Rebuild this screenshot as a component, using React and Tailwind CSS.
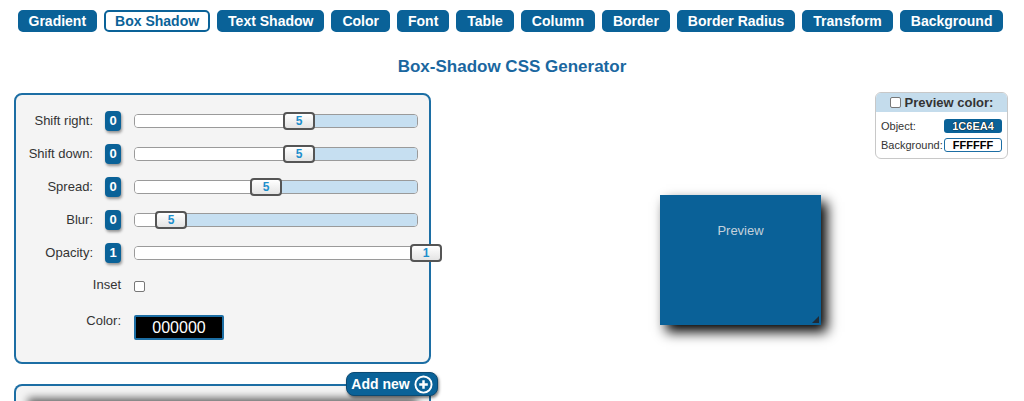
import React from "react";

const tabs = [
  "Gradient",
  "Box Shadow",
  "Text Shadow",
  "Color",
  "Font",
  "Table",
  "Column",
  "Border",
  "Border Radius",
  "Transform",
  "Background",
];

const sliders = [
  { label: "Shift right:", badge: "0", value: "5", left: 149, fill: true },
  { label: "Shift down:", badge: "0", value: "5", left: 149, fill: true },
  { label: "Spread:", badge: "0", value: "5", left: 116, fill: true },
  { label: "Blur:", badge: "0", value: "5", left: 21, fill: true },
  { label: "Opacity:", badge: "1", value: "1", left: 276, fill: false },
];

function Slider({ left, value, fill }) {
  return (
    <div className="relative w-[284px] h-[14px]">
      <div className="flex w-full h-full rounded-[4px] border border-[#9a9a9a] overflow-hidden">
        <div className="h-full bg-white" style={{ width: fill ? left + 16 : "100%" }} />
        {fill && <div className="flex-1 h-full bg-[#c6dff1]" />}
      </div>
      <div
        className="absolute top-1/2 -translate-y-1/2 w-[32px] h-[18px] border-2 border-[#555] rounded-[4px] bg-gradient-to-b from-white to-[#e4e4e4] flex items-center justify-center text-[12px] font-bold text-[#1e8fcc]"
        style={{ left }}
      >
        {value}
      </div>
    </div>
  );
}

function Badge({ children }) {
  return (
    <div className="w-[16px] h-[20px] rounded-[4px] bg-[#0a6298] text-white font-bold text-[13px] flex items-center justify-center shadow-[1px_2px_3px_rgba(0,0,0,0.4)]">
      {children}
    </div>
  );
}

export default function App() {
  return (
    <div className="w-[1024px] h-[401px] overflow-hidden bg-white font-['Liberation_Sans',Arial,sans-serif] text-[#333]">
      {/* nav */}
      <div className="pt-[10px] flex justify-center gap-[7px] pr-[3px]">
        {tabs.map((t) =>
          t === "Box Shadow" ? (
            <div
              key={t}
              className="h-[22px] px-[9px] border-2 border-[#0a6298] rounded-[5px] bg-white text-[#0a6298] text-[14px] font-bold leading-none flex items-center"
            >
              {t}
            </div>
          ) : (
            <div
              key={t}
              className="h-[22px] px-[9px] border-2 border-[#0a6298] rounded-[5px] bg-[#0a6298] text-white text-[14px] font-bold leading-none flex items-center"
            >
              {t}
            </div>
          )
        )}
      </div>

      <h1 className="mt-[25px] text-center text-[17px] leading-[20px] font-bold text-[#1a67a0]">
        Box-Shadow CSS Generator
      </h1>

      <div className="flex px-[14px] mt-[16px]">
        {/* left column */}
        <div className="w-[417px] shrink-0 flex flex-col">
          <div className="border-2 border-[#1c6ea4] rounded-[8px] bg-[#f4f4f4] pt-[9px] pb-[22px]">
            {sliders.map((s) => (
              <div key={s.label} className="h-[33px] flex items-center">
                <div className="w-[77px] text-right text-[13px]">{s.label}</div>
                <div className="ml-[12px]">
                  <Badge>{s.badge}</Badge>
                </div>
                <div className="ml-[13px]">
                  <Slider left={s.left} value={s.value} fill={s.fill} />
                </div>
              </div>
            ))}
            <div className="h-[33px] flex items-center">
              <div className="w-[105px] text-right text-[13px] -mt-[1px]">Inset</div>
              <div className="ml-[13px] mt-[2px] w-[11px] h-[11px] bg-white border border-[#777] rounded-[2px]" />
            </div>
            <div className="mt-[13px] flex items-start">
              <div className="w-[105px] text-right text-[13px] leading-[16px] -mt-[2px]">Color:</div>
              <div className="ml-[13px] w-[90px] h-[25px] bg-black border-2 border-[#1c6ea4] rounded-[2px] text-white text-[16px] flex items-center justify-center">
                000000
              </div>
            </div>
          </div>

          <div className="flex justify-end -mr-[7px] mt-[8px] relative z-10">
            <div className="h-[24px] w-[92px] rounded-[8px] bg-[#0a6298] border border-[#0b4a73] shadow-[1px_2px_3px_rgba(0,0,0,0.5)] flex items-center justify-center gap-[4px] text-white text-[14px] font-bold">
              Add new
              <svg width="19" height="19" viewBox="0 0 20 20">
                <circle cx="10" cy="10" r="8.5" fill="none" stroke="white" strokeWidth="2" />
                <path d="M10 5.5v9M5.5 10h9" stroke="white" strokeWidth="2.6" />
              </svg>
            </div>
          </div>

          <div className="-mt-[12px] h-[40px] border-2 border-b-0 border-[#1c6ea4] rounded-t-[8px] bg-[#f4f4f4] pt-[16px] px-[16px]">
            <div className="h-[30px] bg-[#333] shadow-[0_0_8px_4px_rgba(0,0,0,0.6)]" />
          </div>
        </div>

        {/* right column */}
        <div className="flex-1 flex flex-col pr-[2px]">
          <div className="self-end w-[133px] border border-[#c8c8c8] rounded-[6px] overflow-hidden -mt-[1px]">
            <div className="h-[19px] bg-[#c4dcec] flex items-center justify-center gap-[4px]">
              <div className="w-[11px] h-[11px] bg-white border border-[#777] rounded-[2px]" />
              <span className="text-[13px] font-bold text-[#333]">Preview color:</span>
            </div>
            <div className="px-[5px] pt-[7px] pb-[6px] flex flex-col gap-[5px] text-[11px] leading-[14px]">
              <div className="flex items-center">
                <span>Object:</span>
                <div className="ml-auto w-[58px] h-[14px] rounded-[3px] bg-[#0a6298] text-white font-bold text-[11px] flex items-center justify-center [text-shadow:0_0_1px_#000,0_0_1px_#000]">
                  1C6EA4
                </div>
              </div>
              <div className="flex items-center">
                <span>Background:</span>
                <div className="ml-auto w-[58px] h-[14px] rounded-[3px] bg-white border border-[#1c6ea4] text-black font-bold text-[11px] flex items-center justify-center">
                  FFFFFF
                </div>
              </div>
            </div>
          </div>

          <div className="ml-[229px] mt-[36px] w-[161px] h-[130px] bg-[#0a6198] shadow-[6px_7px_12px_#000] flex flex-col">
            <div className="pt-[26px] text-center text-[13px] text-[#c3d1dc]">Preview</div>
            <div className="mt-auto self-end mr-[2px] mb-[2px]">
              <svg width="7" height="7" viewBox="0 0 7 7">
                <path d="M7 0L0 7h7z" fill="#1f2b36" />
              </svg>
            </div>
          </div>
        </div>
      </div>
    </div>
  );
}
